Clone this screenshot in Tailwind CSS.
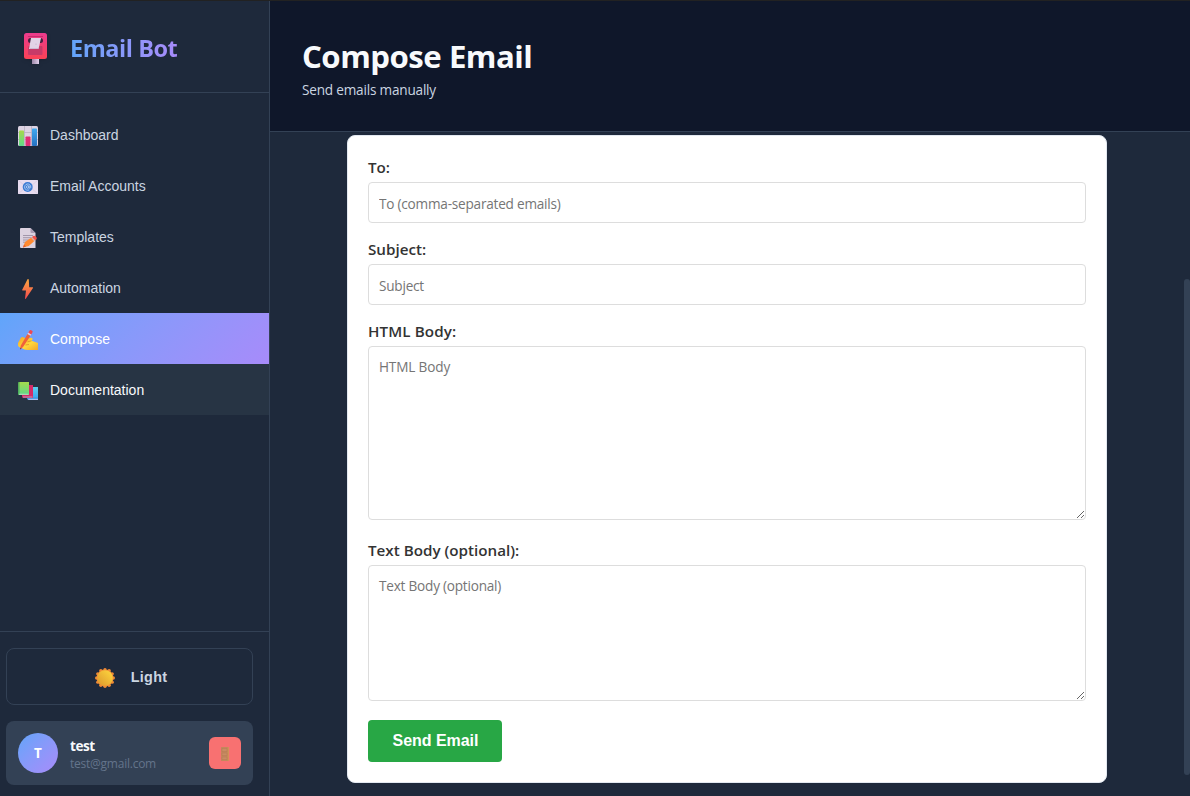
<!DOCTYPE html>
<html lang="en">
<head>
<meta charset="utf-8">
<title>Email Bot</title>
<script src="https://cdn.jsdelivr.net/npm/@tailwindcss/browser@4"></script>
</head>
<body class="h-screen overflow-hidden bg-[#1e293b] font-['Open_Sans','Noto_Sans',sans-serif]">
<svg width="0" height="0" class="absolute">
  <defs>
    <linearGradient id="pink" x1="0" y1="0" x2="0" y2="1"><stop offset="0" stop-color="#ed3b8d"/><stop offset="1" stop-color="#fa4256"/></linearGradient>
    <linearGradient id="post"><stop offset="0" stop-color="#9c86a6"/><stop offset="1" stop-color="#e2d0ec"/></linearGradient>
    <linearGradient id="green" x1="0" y1="0" x2="0" y2="1"><stop offset="0" stop-color="#a5d94c"/><stop offset="1" stop-color="#5fd98a"/></linearGradient>
    <linearGradient id="blue" x1="0" y1="0" x2="0" y2="1"><stop offset="0" stop-color="#3fa9f0"/><stop offset="1" stop-color="#2672c2"/></linearGradient>
    <linearGradient id="bolt" x1="0" y1="0" x2="0" y2="1"><stop offset="0" stop-color="#fba83f"/><stop offset="1" stop-color="#f4484f"/></linearGradient>
    <linearGradient id="hand" x1="0" y1="0" x2="1" y2="1"><stop offset="0" stop-color="#f5a623"/><stop offset=".55" stop-color="#ffd83c"/><stop offset="1" stop-color="#f0a52e"/></linearGradient>
    <linearGradient id="sun" x1="1" y1="0" x2="0" y2="1"><stop offset="0" stop-color="#ffd93f"/><stop offset="1" stop-color="#dc962c"/></linearGradient>
    <linearGradient id="sky" x1="0" y1="0" x2="0" y2="1"><stop offset="0" stop-color="#5bd1f0"/><stop offset="1" stop-color="#379df2"/></linearGradient>
  </defs>
</svg>
<div class="flex h-full border-t border-[#222222]">
  <aside class="flex w-[270px] shrink-0 flex-col border-r border-[#334155]">
    <div class="flex h-[92px] shrink-0 items-center gap-[23px] border-b border-[#334155] pl-6 pt-1">
      <svg width="23" height="31" viewBox="0 0 23 31" class="drop-shadow">
        <rect x="8" y="25" width="7" height="6" fill="url(#post)"/>
        <rect width="23" height="26" rx="2.5" fill="url(#pink)"/>
        <path d="M4 3.5h15" stroke="#c42b6c" stroke-width="1"/>
        <rect x="4" y="13" width="14.500" height="9" rx="1" fill="#c73a68"/>
        <rect x="4" y="5" width="15" height="5" rx="2.500" fill="#43213f"/>
        <path d="M7 5h10l-2.500 11H5z" fill="#e2d3e6"/>
        <path d="M12 10.500v1.500M6 15.500h8" stroke="#c5b2cc" stroke-width=".8"/>
      </svg>
      <span class="-mt-0.5 bg-linear-to-r from-[#60a5fa] to-[#a78bfa] bg-clip-text text-[23.500px] font-bold leading-8 tracking-[-0.450px] text-transparent">Email Bot</span>
    </div>
    <nav class="flex flex-1 flex-col pt-4 font-['Liberation_Sans',sans-serif] text-sm text-[#cbd5e1]">
      <a class="flex h-[51px] items-center gap-3 pl-[18px] pt-0.5">
        <svg width="20" height="20" viewBox="0 0 20 20">
          <rect width="20" height="20" rx="1.500" fill="#ddd3e3"/><path d="M6.500 0v20M13.500 0v20M0 6.500h20M0 13.500h20" stroke="#b9afc2" stroke-width=".8"/>
          <rect x="1" y="4.500" width="5" height="15.500" rx=".8" fill="url(#green)"/><rect x="7.500" y="10.500" width="5" height="9.500" rx=".8" fill="#de2e75"/><rect x="14" y="2.500" width="5" height="17.500" rx=".8" fill="url(#blue)"/>
        </svg><span class="pb-0.5">Dashboard</span></a>
      <a class="flex h-[51px] items-center gap-3 pl-[18px] pt-0.5">
        <svg width="20" height="14" viewBox="0 0 20 14">
          <rect width="20" height="14" rx=".5" fill="#e8dcef"/><path d="M0 0l7 6M20 0l-7 6M0 14l7-6M20 14l-7-6" stroke="#d6c9e0" stroke-width=".8"/>
          <circle cx="9.700" cy="7" r="5" fill="#3b7bd3"/><circle cx="9.700" cy="7" r="1.300" fill="none" stroke="#c3d8f6" stroke-width=".8"/><path d="M11 5.500v2c0 1.200 1.800 1 1.800-.5A3.100 3.100 0 1 0 11.200 9.800" fill="none" stroke="#c3d8f6" stroke-width=".8"/>
        </svg><span class="pb-0.5">Email Accounts</span></a>
      <a class="flex h-[51px] items-center gap-3 pl-[18px] pt-0.5">
        <svg width="20" height="20" viewBox="0 0 20 20">
          <path d="M2 1q0-1 1-1h9.500l5 5v15H3q-1 0-1-1z" fill="#dcd2e0"/><path d="M12.500 0v4q0 1 1 1h4z" fill="#a99bb1"/>
          <path d="M5 7.500h10M5 9.700h9M5 12h7M5 14.200h4" stroke="#93889d" stroke-width=".8"/>
          <path d="M5 19.500l2-5.500 6.500-4.500 3.200 3.200-6 5.300z" fill="#ff8a30"/><path d="M5 19.500l1-3 2 2z" fill="#e5602f"/><path d="M13 9.800l1.200-1 3.200 3.200-1.200 1.200z" fill="#d8b4b0"/><path d="M14.500 8.500q1.500-1.500 3.300 0 2 1.600.4 3.200l-1 .6-3-3z" fill="#f2544b"/>
        </svg><span class="pb-0.5">Templates</span></a>
      <a class="flex h-[51px] items-center gap-3 pl-[18px] pt-0.5">
        <svg width="20" height="20" viewBox="0 0 20 20">
          <path d="M9.500 0 4.200 10.500q-.3.700.4.700H8L7 19.300q.2.700.8.200L15 8.800q.3-.8-.4-.8H11.200L10.800.4q-.5-.8-1.300-.4z" transform="translate(0 .2)" fill="url(#bolt)"/>
        </svg><span class="pb-0.5">Automation</span></a>
      <a class="flex h-[51px] items-center gap-3 bg-linear-135 from-[#60a5fa] to-[#a78bfa] pl-[18px] pt-0.5 text-white">
        <svg width="20" height="20" viewBox="0 0 20 20">
          <path d="M0 13 3 7.500q1.500-1 3 0l2.500 1.500 4-1.300q2.500-.2 2 1.800l-1 1.300L20 13v7H9q-3 0-5-1.800L1 17q-1.500-1.500-1-4z" fill="url(#hand)"/>
          <path d="M9.500 11.800l4-1M7.500 15l3.500-.5" stroke="#dd9128" stroke-width=".8" fill="none"/>
          <path d="M2 19.500l.8-4L9.500 4l3 1.800L5 17z" fill="#f0623a"/><path d="M9.500 4l.8-1.400 3 1.800-.8 1.400z" fill="#e9cadb"/><path d="M10.300 2.600 11.500.6q.8-.9 2.200-.2t.8 1.900l-1.200 2.100z" fill="#f04850"/><path d="M2 19.500l.4-1.800 1.200.7z" fill="#763844"/>
        </svg><span class="pb-0.5">Compose</span></a>
      <a class="flex h-[51px] items-center gap-3 bg-[#273444] pl-[18px] pt-0.5 text-[#f8fafc]">
        <svg width="20" height="20" viewBox="0 -1 20 20">
          <path d="M9 6q0-1 1-1h10v13H11q-2 0-2-2z" fill="url(#sky)"/><path d="M10 16.500h10V18H11q-1 0-1-1.500z" fill="#a9bcef"/><path d="M9.500 16.200h10.500" stroke="#2a7fd0" stroke-width=".6"/>
          <path d="M4 3h11v13H5.500Q4 16 4 14.500z" fill="#d52b68"/><path d="M5 14.500h9.500v1H5z" fill="#b5a3bd"/>
          <path d="M0 1.500Q0 0 1.500 0H11v13H1.500Q0 13 0 11.500z" fill="url(#green)"/><path d="M.8 0V13" stroke="#47a358" stroke-width="1.200"/><path d="M1 11.800h9.500v.9H1z" fill="#c9d9c9"/>
        </svg><span class="pb-0.5">Documentation</span></a>
    </nav>
    <div class="flex h-[165px] shrink-0 flex-col gap-4 border-t border-[#334155] pl-1.5 pr-4 pt-4">
      <button class="flex h-[57px] shrink-0 items-center justify-center gap-4 rounded-lg border border-[#334155] pl-[3px] pt-0.5 font-['Liberation_Sans',sans-serif] text-[14.400px] font-bold tracking-[0.300px] text-[#cbd5e1]">
        <svg width="20" height="20" viewBox="0 0 20 20">
          <circle cx="10" cy="10" r="8.400" fill="#ef8a35"/>
          <g fill="#ef8a35"><circle cx="10" cy="1.700" r="1.700"/><circle cx="14.150" cy="2.810" r="1.700"/><circle cx="17.190" cy="5.850" r="1.700"/><circle cx="18.300" cy="10" r="1.700"/><circle cx="17.190" cy="14.150" r="1.700"/><circle cx="14.150" cy="17.190" r="1.700"/><circle cx="10" cy="18.300" r="1.700"/><circle cx="5.850" cy="17.190" r="1.700"/><circle cx="2.810" cy="14.150" r="1.700"/><circle cx="1.700" cy="10" r="1.700"/><circle cx="2.810" cy="5.850" r="1.700"/><circle cx="5.850" cy="2.810" r="1.700"/></g>
          <circle cx="10" cy="10" r="7.800" fill="url(#sun)"/>
        </svg><span>Light</span>
      </button>
      <div class="flex h-16 shrink-0 items-center rounded-lg bg-[#334155] px-3">
        <div class="flex size-10 items-center justify-center rounded-full bg-linear-135 from-[#60a5fa] to-[#a78bfa] pt-px text-[13.500px] font-bold text-white">T</div>
        <div class="ml-3 flex flex-1 flex-col pt-[3px]">
          <span class="text-[13.600px] font-bold leading-[18px] tracking-[-0.500px] text-[#f8fafc]">test</span>
          <span class="text-xs leading-[17px] tracking-[-0.240px] text-[#64748b]">test@gmail.com</span>
        </div>
        <div class="flex size-8 items-center justify-center rounded-md bg-[#f87171] pt-0.5">
          <svg width="8" height="14" viewBox="0 0 8 14"><rect width="8" height="14" rx=".5" fill="#c4875c"/><path d="M1 1.500h5v3H1zM1 6h5v2.500H1zM1 10h5v2.500H1z" fill="#c98c63" stroke="#b47a56" stroke-width=".5"/><path d="M7.300 0v14" stroke="#d99a55" stroke-width=".8"/></svg>
        </div>
      </div>
    </div>
  </aside>
  <main class="flex min-w-0 flex-1 flex-col">
    <header class="h-[131px] shrink-0 border-b border-[#334155] bg-[#0f172a] pl-8 pt-[35px]">
      <h1 class="text-[31.200px] font-bold leading-10 tracking-[-0.500px] text-[#f8fafc]">Compose Email</h1>
      <p class="pt-[5px] text-[13.600px] leading-[18px] tracking-[-0.200px] text-[#cbd5e1]">Send emails manually</p>
    </header>
    <div class="flex flex-1 justify-end pt-[3px]">
      <form class="mr-[83px] flex h-[648px] w-[760px] flex-col rounded-lg border border-[#e2e8f0] bg-white px-5 pt-5">
        <label class="h-[26px] text-[15.200px] font-semibold leading-[22px] text-[#333]">To:</label>
        <input class="h-[41px] shrink-0 rounded border border-[#ddd] px-2.5 pt-px text-[13.600px] tracking-[-0.220px] placeholder:text-[#757575]" placeholder="To (comma-separated emails)">
        <label class="mt-[15px] h-[26px] text-[15.200px] font-semibold leading-[22px] text-[#333]">Subject:</label>
        <input class="h-[41px] shrink-0 rounded border border-[#ddd] px-2.5 pt-px text-[13.600px] tracking-[-0.220px] placeholder:text-[#757575]" placeholder="Subject">
        <label class="mt-[15px] h-[26px] text-[15.200px] font-semibold leading-[22px] tracking-[0.100px] text-[#333]">HTML Body:</label>
        <textarea class="h-[174px] shrink-0 resize rounded border border-[#ddd] px-2.5 py-2.5 text-[13.600px] leading-5 tracking-[-0.150px] placeholder:text-[#757575]" placeholder="HTML Body"></textarea>
        <label class="mt-[19px] h-[26px] text-[15.200px] font-semibold leading-[22px] text-[#333]">Text Body (optional):</label>
        <textarea class="h-[136px] shrink-0 resize rounded border border-[#ddd] px-2.5 py-2.5 text-[13.600px] leading-5 tracking-[-0.220px] placeholder:text-[#757575]" placeholder="Text Body (optional)"></textarea>
        <button type="button" class="mt-[19px] h-[42px] w-[134px] shrink-0 rounded bg-[#28a745] pl-px font-['Liberation_Sans',sans-serif] text-base font-bold tracking-[-0.050px] text-white">Send Email</button>
      </form>
    </div>
  </main>
</div>
<div class="absolute right-0 top-[279px] h-[496px] w-1.5 rounded-[3px] bg-[#334155]"></div>
</body>
</html>
